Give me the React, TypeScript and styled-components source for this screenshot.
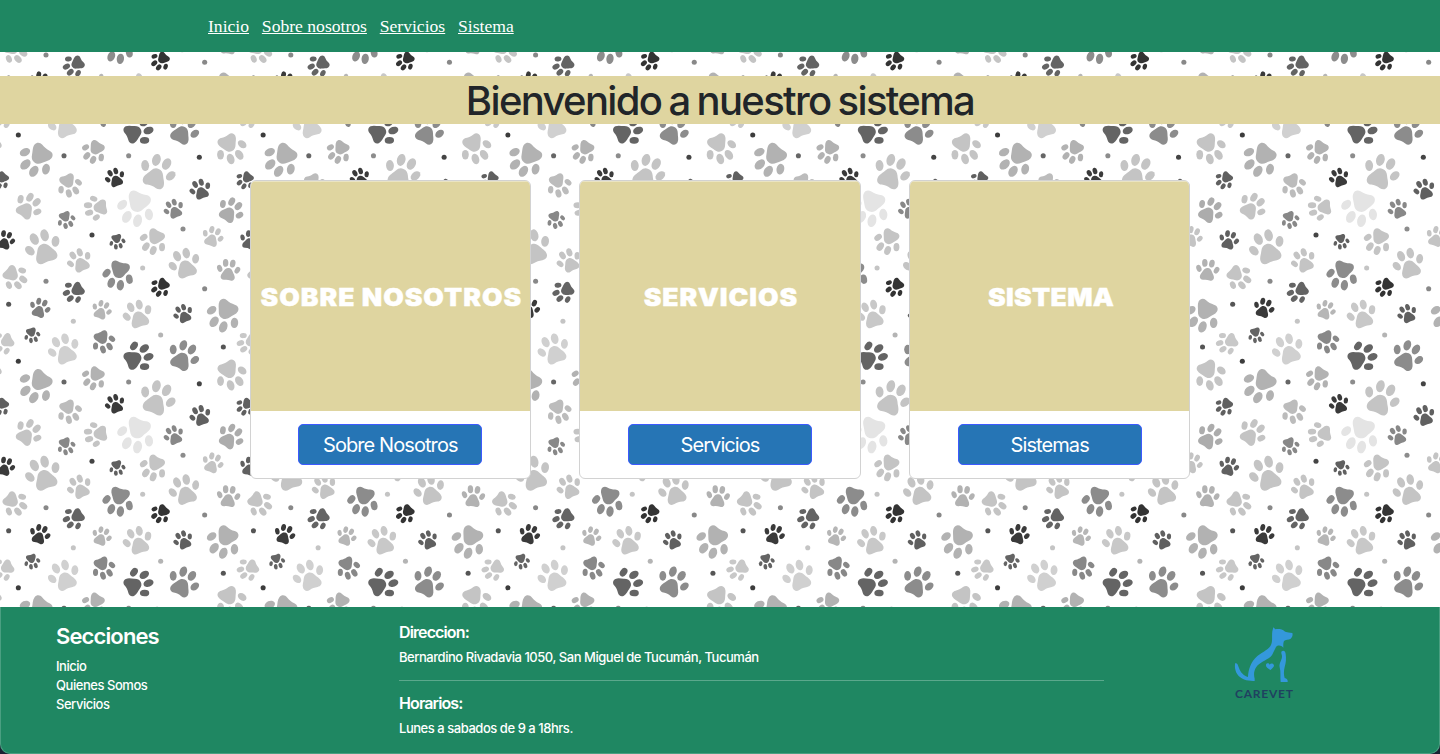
import React from "react";
import styled, { createGlobalStyle } from "styled-components";

const GlobalStyle = createGlobalStyle`
  *, *::before, *::after { box-sizing: border-box; }
  body { margin: 0; background: #1c2232; font-family: Inter, "Liberation Sans", sans-serif; }
  h1, h2, h3, p, ul { margin: 0; padding: 0; }
`;

const Page = styled.div`
  display: flex;
  flex-direction: column;
  height: 754px;
  overflow: hidden;
`;

const NavBar = styled.nav`
  display: flex;
  align-items: center;
  gap: 12.8px;
  height: 52px;
  flex: none;
  padding: 0 208px;
  background: #1f8762;
`;

const NavLink = styled.a`
  color: #fff;
  font-family: "Liberation Serif", serif;
  font-size: 17.6px;
  line-height: 24px;
  text-decoration: underline;
`;

const Main = styled.main`
  position: relative;
  flex: none;
  height: 555px;
  padding-top: 24px;
  background: #fff;
  overflow: hidden;
`;

const Backdrop = styled.svg`
  position: absolute;
  inset: 0;
  width: 1440px;
  height: 555px;
`;

const Banner = styled.h1`
  position: relative;
  height: 48px;
  line-height: 50px;
  background: #dfd5a0;
  color: #212529;
  font-size: 40px;
  font-weight: 540;
  letter-spacing: -1.65px;
  word-spacing: -2px;
  text-align: center;
  white-space: nowrap;
`;

const Cards = styled.section`
  position: relative;
  display: flex;
  justify-content: center;
  gap: 48.2px;
  margin-top: 56px;
`;

const Card = styled.article`
  display: flex;
  flex-direction: column;
  width: 281.5px;
  height: 299px;
  border: 1px solid #d2d2d2;
  border-radius: 6px;
  background: #fff;
  overflow: hidden;
`;

const Cover = styled.div`
  display: flex;
  align-items: center;
  justify-content: center;
  height: 230px;
  padding: 1px 0 0 2px;
  border-top: 1px solid #eae4c3;
  background: #dfd5a0;
  color: #fff;
`;

const CoverTitle = styled.span<{ $spacing: number }>`
  font-size: 24px;
  font-weight: 900;
  letter-spacing: ${(p) => p.$spacing}px;
  white-space: nowrap;
  -webkit-text-stroke: 0.4px #fff;
  transform: scaleX(1.105);
`;

const CardButton = styled.button`
  width: 184px;
  height: 41px;
  margin: 13px auto 0;
  padding: 0;
  border: 1px solid #3d5afe;
  border-radius: 5px;
  background: #2675b5;
  color: #fff;
  font-family: inherit;
  font-size: 20px;
  font-weight: 430;
  letter-spacing: -0.92px;
`;

const Footer = styled.footer`
  display: flex;
  flex: none;
  height: 147px;
  padding-left: 55px;
  border: 1px solid #4a9f81;
  border-top: 0;
  border-radius: 0 0 10px 10px;
  background: #1f8762;
  color: #fff;
`;

const Sections = styled.div`
  width: 343px;
  padding-top: 16px;
`;

const SectionsTitle = styled.h2`
  font-size: 22px;
  font-weight: 600;
  line-height: 26px;
  letter-spacing: -0.87px;
  margin-bottom: 8px;
`;

const SmallText = styled.p`
  font-size: 13px;
  font-weight: 450;
  line-height: 19px;
  letter-spacing: -0.46px;
`;

const Info = styled.div`
  width: 705px;
  padding-top: 15px;
`;

const InfoTitle = styled.h3`
  font-size: 16px;
  font-weight: 600;
  line-height: 20px;
  letter-spacing: -0.88px;
  margin-bottom: 6px;
`;

const Rule = styled.div`
  height: 1px;
  margin: 13px 0 12px;
  background: #5ba88c;
`;

const Logo = styled.svg`
  width: 90px;
  height: 100px;
  margin: 8px 0 0 116px;
`;

const TILE_W = 734.4;
const TILE_H = 679;

/* x, y of the pad, rotation, scale, colour */
type Paw = [number, number, number, number, string];

const FIRST_COLUMN_DARK: Paw = [12, 359, 15, 0.65, "#606060"];
const FADED_PAW: Paw = [116, 563, 18, 0.68, "#3a3a3a"];

const PAWS: Paw[] = [
  [543, 32, 26, 1.03, "#8c8c8c"],
  [400, 27, 63, 1, "#646464"],
  [198, 13, -21, 1.04, "#d0d0d0"],
  [121, 92, 219, 1.16, "#b2b2b2"],
  [289, 72, 213, 0.8, "#b2b2b2"],
  [685, 58, 154, 1.03, "#c4c4c4"],
  [465, 162, 22, 1.18, "#c4c4c4"],
  [349, 171, -21, 0.65, "#3a3a3a"],
  [203, 171, 157, 0.81, "#bcbcbc"],
  [605, 207, -20, 0.7, "#606060"],
  [8, 161, 220, 0.61, "#606060"],
  [76, 259, 37, 0.9, "#c4c4c4"],
  [301, 250, 262, 0.81, "#c4c4c4"],
  [195, 278, 159, 0.6, "#888"],
  [415, 234, 200, 1.22, "#e4e4e4"],
  [526, 265, -24, 0.66, "#888"],
  [684, 271, 34, 0.86, "#acacac"],
  [634, 349, 20, 0.7, "#c4c4c4"],
  FIRST_COLUMN_DARK,
  [136, 388, -20, 1.17, "#c4c4c4"],
  [350, 344, 168, 0.53, "#606060"],
  [467, 339, 208, 0.89, "#c4c4c4"],
  [244, 422, -25, 0.81, "#c4c4c4"],
  [559, 435, -18, 1.03, "#c4c4c4"],
  [684, 451, 6, 0.76, "#b2b2b2"],
  [359, 437, 195, 1.01, "#8c8c8c"],
  [34, 450, 132, 0.85, "#c4c4c4"],
  [232, 497, 236, 0.74, "#646464"],
  [489, 482, 223, 0.65, "#333"],
  FADED_PAW,
  [301, 568, 21, 0.65, "#b6b6b6"],
  [418, 586, -18, 0.96, "#c8c8c8"],
  [554, 579, -24, 0.64, "#606060"],
  [680, 558, 209, 1.12, "#b2b2b2"],
  [94, 625, 165, 0.53, "#646464"],
  [305, 641, 156, 0.77, "#888"],
  [21, 651, 242, 0.75, "#c8c8c8"],
];

const DOTS: [number, number, string][] = [
  [55, 33, "#3c3c3c"],
  [192, 95, "#666"],
  [386, 95, "#8c8c8c"],
  [598, 100, "#444"],
  [276, 333, "#444"],
  [549, 315, "#8c8c8c"],
  [428, 432, "#c4c4c4"],
  [138, 472, "#888"],
  [26, 541, "#555"],
  [614, 494, "#888"],
  [220, 592, "#c4c4c4"],
  [482, 633, "#b4b4b4"],
  [670, 669, "#555"],
];

const PawShape = () => (
  <g id="paw">
    <path d="M0-25C8-25 13-21 17-13C20-6 28 2 28 11C28 20 21 25 12 23C4 21-4 21-12 23C-21 25-28 20-28 11C-28 2-20-6-17-13C-13-21-8-25 0-25Z" />
    <ellipse cx="-35" cy="-20" rx="10" ry="14" transform="rotate(-26 -35 -20)" />
    <ellipse cx="-14" cy="-44" rx="10.8" ry="15.5" transform="rotate(-7 -14 -44)" />
    <ellipse cx="14" cy="-44" rx="10.8" ry="15.5" transform="rotate(7 14 -44)" />
    <ellipse cx="35" cy="-20" rx="10" ry="14" transform="rotate(26 35 -20)" />
  </g>
);

const pawColour = (paw: Paw, col: number, row: number) => {
  if (paw === FIRST_COLUMN_DARK && col === 0) return "#3a3a3a";
  if (paw === FADED_PAW && col === 0 && row === 0) return "#808080";
  return paw[4];
};

const PawBackdrop = () => (
  <Backdrop viewBox="0 -216 4320 1665" aria-hidden="true">
    <defs>
      <PawShape />
    </defs>
    {[-1, 0, 1, 2].map((row) =>
      [-1, 0, 1, 2, 3, 4, 5].map((col) => (
        <g key={`${row}:${col}`} transform={`translate(${col * TILE_W} ${row * TILE_H})`}>
          {PAWS.map((paw, i) => (
            <use
              key={i}
              href="#paw"
              fill={pawColour(paw, col, row)}
              transform={`translate(${paw[0]} ${paw[1]}) rotate(${paw[2]}) scale(${paw[3]})`}
            />
          ))}
          {DOTS.map(([x, y, fill], i) => (
            <circle key={i} cx={x} cy={y} r="7.6" fill={fill} />
          ))}
        </g>
      ))
    )}
  </Backdrop>
);

const CareVetLogo = () => (
  <Logo viewBox="0 0 270 300" role="img" aria-label="Carevet">
    <g fill="#3498db">
      <path d="M160 37L166 43C174 41 184 42 190 46C194 51 200 53 217 54C219 60 217 67 212 71C206 75 196 73 192 78C189 84 190 91 190 98C184 91 174 89 168 96C162 106 159 119 151 126C138 136 119 142 109 156C101 168 101 180 104 191V198C85 199 62 194 52 178C45 167 43 154 46 144C53 145 54 151 57 159C62 173 72 183 84 186C85 164 93 139 112 123C129 109 149 104 154 87C158 77 155 61 157 49Z" />
      <path d="M184 110C190 105 196 108 197 117C199 132 198 143 194 156C191 168 191 180 194 189C200 191 204 194 203 201H182C180 188 183 170 179 157C176 144 187 134 186 123C186 118 183 115 184 110Z" />
      <path d="M151 165C145 161 136 156 138 149C140 143 147 144 149 149C152 144 160 145 162 151C162 157 156 161 151 165Z" />
    </g>
    <text
      x="45"
      y="250"
      fill="#1f4160"
      fontFamily="Lato, sans-serif"
      fontSize="36"
      fontWeight="700"
      textLength="174"
      lengthAdjust="spacing"
    >
      CAREVET
    </text>
  </Logo>
);

const NAV = ["Inicio", "Sobre nosotros", "Servicios", "Sistema"];

const CARDS = [
  { cover: "SOBRE NOSOTROS", action: "Sobre Nosotros", spacing: 0.9 },
  { cover: "SERVICIOS", action: "Servicios", spacing: 0.9 },
  { cover: "SISTEMA", action: "Sistemas", spacing: 0.3 },
];

export default function App() {
  return (
    <Page>
      <GlobalStyle />
      <NavBar>
        {NAV.map((label) => (
          <NavLink key={label}>{label}</NavLink>
        ))}
      </NavBar>
      <Main>
        <PawBackdrop />
        <Banner>Bienvenido a nuestro sistema</Banner>
        <Cards>
          {CARDS.map((card) => (
            <Card key={card.cover}>
              <Cover>
                <CoverTitle $spacing={card.spacing}>{card.cover}</CoverTitle>
              </Cover>
              <CardButton>{card.action}</CardButton>
            </Card>
          ))}
        </Cards>
      </Main>
      <Footer>
        <Sections>
          <SectionsTitle>Secciones</SectionsTitle>
          <SmallText>Inicio</SmallText>
          <SmallText>Quienes Somos</SmallText>
          <SmallText>Servicios</SmallText>
        </Sections>
        <Info>
          <InfoTitle>Direccion:</InfoTitle>
          <SmallText>Bernardino Rivadavia 1050, San Miguel de Tucumán, Tucumán</SmallText>
          <Rule />
          <InfoTitle>Horarios:</InfoTitle>
          <SmallText>Lunes a sabados de 9 a 18hrs.</SmallText>
        </Info>
        <CareVetLogo />
      </Footer>
    </Page>
  );
}
